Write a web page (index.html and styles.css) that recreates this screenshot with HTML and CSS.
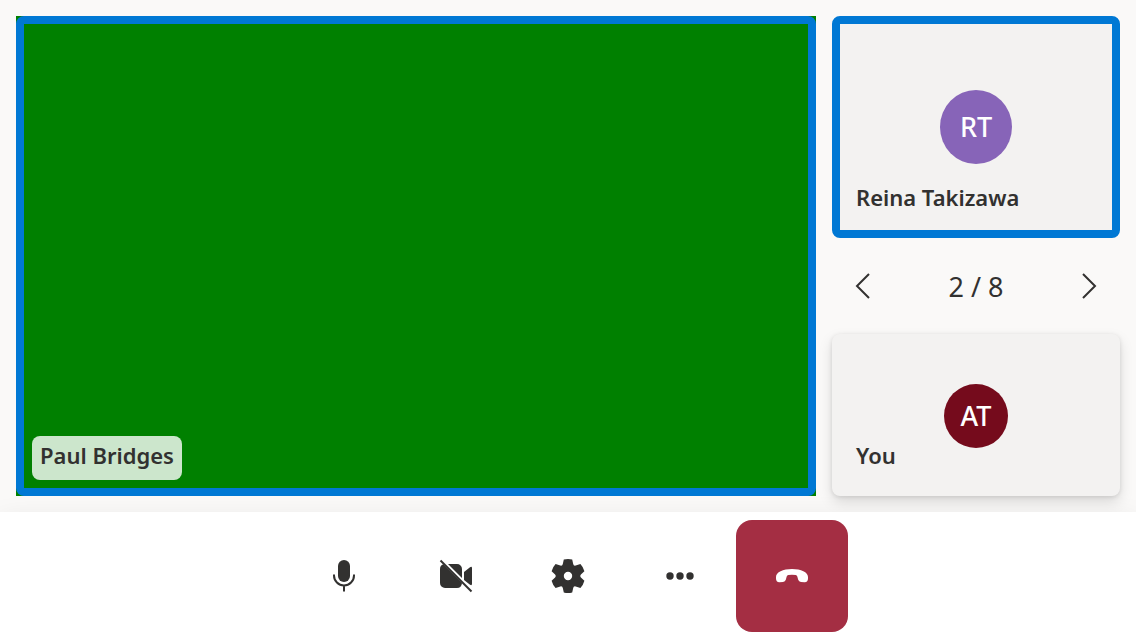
FILE: index.html
```html
<!DOCTYPE html>
<html lang="en">
<head>
<meta charset="utf-8">
<meta name="viewport" content="width=device-width, initial-scale=1">
<title>Call</title>
<link rel="stylesheet" href="styles.css">
</head>
<body class="call">
<main class="stage">
  <section class="video" aria-label="Paul Bridges">
    <div class="video-ring"><span class="video-name">Paul Bridges</span></div>
  </section>
  <aside class="side">
    <section class="tile speaking">
      <span class="avatar avatar-purple">RT</span>
      <span class="tile-name">Reina Takizawa</span>
    </section>
    <nav class="pager" aria-label="Participants">
      <button class="pager-button" type="button" aria-label="Previous">
        <svg class="chevron" viewBox="0 0 40 40"><path d="M27 8 15 20l12 12"/></svg>
      </button>
      <span class="pager-count">2 / 8</span>
      <button class="pager-button" type="button" aria-label="Next">
        <svg class="chevron" viewBox="0 0 40 40"><path d="m13 8 12 12-12 12"/></svg>
      </button>
    </nav>
    <section class="tile local">
      <span class="avatar avatar-red">AT</span>
      <span class="tile-name">You</span>
    </section>
  </aside>
</main>
<footer class="controls">
  <button class="control" type="button" aria-label="Mute">
    <svg class="icon" viewBox="0 0 40 40"><rect x="14" y="4" width="12" height="22" rx="6"/><path class="line" d="M10 18.500v1a10 10 0 0 0 20 0v-1M20 29.500V35.500"/></svg>
  </button>
  <button class="control" type="button" aria-label="Turn on camera">
    <svg class="icon" viewBox="0 0 40 40"><path d="M4 13q0-3.500 3.300-4.700L26 27q-.5 5-5 5H9a5 5 0 0 1-5-5ZM12 8h9a5 5 0 0 1 5 5v9ZM28 16l6-4.700q2-1.300 2 1v15.400q0 2.300-2 1l-6-4.700Z"/><path class="line" d="m4.500 4.500 31 31"/></svg>
  </button>
  <button class="control" type="button" aria-label="Settings">
    <svg class="icon" viewBox="0 0 40 40"><path fill-rule="evenodd" d="M15.800 3.500q4.200-1 8.400 0l1 4.600q.4 2.100 2.500 1.500l4.700-1.500q2.900 3 4 7.200l-3.500 3.200q-1.500 1.500 0 3l3.500 3.200q-1.100 4.200-4 7.200l-4.700-1.500q-2.100-.6-2.500 1.500l-1 4.600q-4.200 1-8.400 0l-1-4.600q-.4-2.100-2.500-1.500l-4.700 1.500q-2.900-3-4-7.200l3.500-3.200q1.500-1.500 0-3l-3.500-3.200q1.100-4.200 4-7.200l4.700 1.500q2.100.6 2.500-1.500ZM20 15.800a4.200 4.200 0 1 0 0 8.400 4.200 4.200 0 0 0 0-8.400Z"/></svg>
  </button>
  <button class="control" type="button" aria-label="More options">
    <svg class="icon" viewBox="0 0 40 40"><circle cx="10" cy="20" r="3.700"/><circle cx="20" cy="20" r="3.700"/><circle cx="30" cy="20" r="3.700"/></svg>
  </button>
  <button class="control leave" type="button" aria-label="Leave">
    <svg class="icon" viewBox="0 0 40 40"><path d="M4 21c0-5 7-8 16-8s16 3 16 8v1.500q0 3.800-3.500 3.700l-3.500-.2q-2.200-.2-2.800-2.200L25.300 20.500q-.4-1.300-1.600-1.500-3.700-.6-7.400 0-1.200.2-1.600 1.500l-.9 3.300Q13.200 25.800 11 26l-3.500.2Q4 26.300 4 22.500Z"/></svg>
  </button>
</footer>
</body>
</html>
```
FILE: styles.css
```css
* { box-sizing: border-box; }
.call {
  margin: 0;
  min-height: 100vh;
  display: flex;
  flex-direction: column;
  background: #faf9f8;
  color: #323130;
  font-family: "Segoe UI", "Noto Sans", sans-serif;
}
button {
  border: 0;
  padding: 0;
  background: none;
  color: inherit;
  font: inherit;
  cursor: pointer;
}
.stage {
  flex: 1;
  display: flex;
  gap: 16px;
  padding: 16px;
}
.video {
  flex: 1;
  display: flex;
  background: #008000;
}
.video-ring {
  flex: 1;
  display: flex;
  align-items: flex-end;
  padding: 8px;
  border: 8px solid #0078d4;
  border-radius: 8px;
}
.video-name {
  padding: 3px 8px 9px;
  border-radius: 8px;
  background: rgba(255, 255, 255, 0.8);
  font-size: 22px;
  font-weight: 600;
  line-height: 32px;
}
.side {
  width: 288px;
  display: flex;
  flex-direction: column;
}
.tile {
  position: relative;
  display: flex;
  align-items: center;
  justify-content: center;
  border-radius: 8px;
  background: #f3f2f1;
}
.speaking {
  flex: 1;
  border: 8px solid #0078d4;
}
.local {
  aspect-ratio: 16 / 9;
  padding-top: 2px;
  box-shadow: 0 6px 14px rgba(0, 0, 0, 0.13), 0 1px 4px rgba(0, 0, 0, 0.11);
}
.tile-name {
  position: absolute;
  left: 24px;
  bottom: 25px;
  font-size: 22px;
  font-weight: 600;
  line-height: 32px;
}
.speaking .tile-name {
  left: 16px;
  bottom: 17px;
}
.avatar {
  display: flex;
  align-items: center;
  justify-content: center;
  padding-bottom: 2px;
  border-radius: 50%;
  color: #fff;
  font-size: 27px;
  font-weight: 500;
}
.avatar-purple {
  width: 72px;
  height: 74px;
  background: #8764b8;
}
.avatar-red {
  width: 64px;
  height: 64px;
  background: #750b1c;
}
.pager {
  height: 96px;
  display: flex;
  align-items: center;
  justify-content: space-between;
  padding: 0 10px;
}
.pager-button {
  display: flex;
}
.pager-count {
  font-size: 27px;
}
.chevron {
  width: 40px;
  height: 40px;
  fill: none;
  stroke: currentColor;
  stroke-width: 2;
}
.controls {
  position: relative;
  display: flex;
  justify-content: center;
  padding: 8px;
  background: #fff;
  box-shadow: 0 12px 28px rgba(0, 0, 0, 0.13);
}
.control {
  width: 112px;
  height: 112px;
  display: flex;
  align-items: center;
  justify-content: center;
  border-radius: 16px;
}
.leave {
  background: #a42e43;
  color: #fff;
}
.icon {
  width: 40px;
  height: 40px;
  fill: currentColor;
}
.line {
  fill: none;
  stroke: currentColor;
  stroke-width: 2;
}
```
